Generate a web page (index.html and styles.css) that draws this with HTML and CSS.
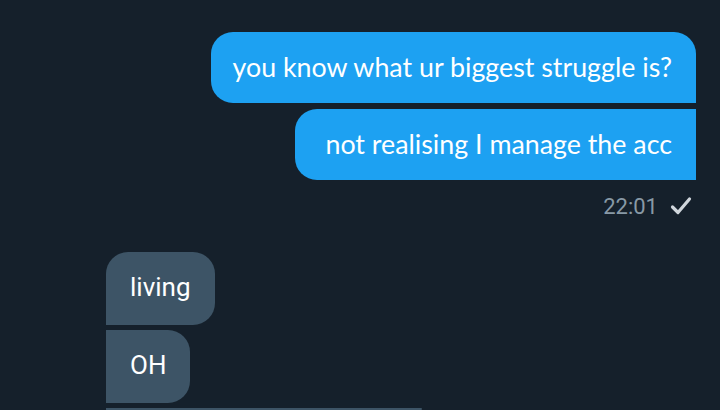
FILE: index.html
```html
<!DOCTYPE html>
<html lang="en">
<head>
    <meta charset="UTF-8">
    <meta name="viewport" content="width=device-width, initial-scale=1.0">
    <title>Chat</title>
    <link rel="stylesheet" href="styles.css">
</head>
<body>
    <div id="chat">
        <div class="group sent">
            <div class="bubble first">you know what ur biggest struggle is?</div>
            <div class="bubble last">not realising I manage the acc</div>
            <div class="meta">
                <span class="time">22:01</span>
                <svg class="check" width="24" height="24" viewBox="0 0 24 24">
                    <path d="M3.5 13l5.5 5.5L20.5 5" fill="none" stroke="#d0d6dc" stroke-width="3.2" stroke-linecap="round" stroke-linejoin="round"/>
                </svg>
            </div>
        </div>
        <div class="group received">
            <div class="bubble first">living</div>
            <div class="bubble">OH</div>
            <div class="bubble long">&nbsp;</div>
        </div>
    </div>
</body>
</html>
```

FILE: styles.css
```css
body {
    margin: 0;
    background-color: #15202b;
    height: 410px;
    overflow: hidden;
}
#chat {
    display: flex;
    flex-direction: column;
    padding-top: 32px;
}
.group {
    display: flex;
    flex-direction: column;
    gap: 6px;
}
.bubble {
    color: #ffffff;
    border-radius: 22px;
    box-sizing: border-box;
}
.sent {
    align-items: flex-end;
    padding-right: 24px;
}
.sent .bubble {
    background-color: #1da1f2;
    font-family: "Lato", sans-serif;
    font-size: 26.8px;
    height: 71px;
    line-height: 71px;
    padding: 0 24px;
    border-bottom-right-radius: 0;
    border-top-right-radius: 0;
}
.sent .bubble.first {
    border-top-right-radius: 22px;
    padding-left: 22px;
}
.sent .bubble.last {
    padding-left: 30px;
}
.meta {
    display: flex;
    align-items: center;
    gap: 11px;
    margin-top: 2px;
    padding-right: 3px;
    color: #8899a6;
    font-family: "Roboto", sans-serif;
    font-size: 22px;
    height: 36px;
}
.received {
    align-items: flex-start;
    padding-left: 106px;
    margin-top: 28px;
    gap: 5px;
}
.received .bubble {
    background-color: #3d5466;
    font-family: "Roboto", sans-serif;
    font-size: 26px;
    height: 73px;
    line-height: 70px;
    padding: 0 24px;
    border-top-left-radius: 0;
    border-bottom-left-radius: 0;
}
.received .bubble.first {
    border-top-left-radius: 22px;
}
.received .bubble.long {
    width: 316px;
    height: 2px;
}
```
